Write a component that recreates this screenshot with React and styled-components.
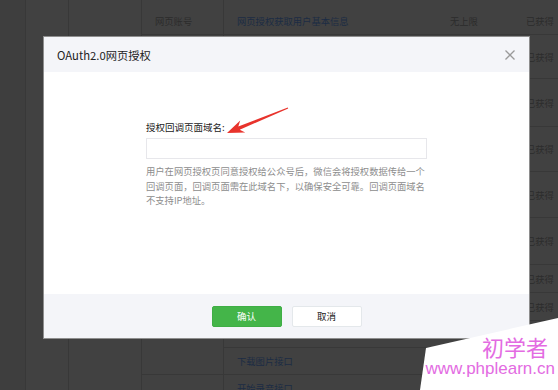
import React from "react";
import styled, { createGlobalStyle } from "styled-components";

const GlobalStyle = createGlobalStyle`
  html, body {
    margin: 0;
    padding: 0;
    background: #414141;
  }
  body {
    font-family: "Noto Sans CJK SC", "Liberation Sans", sans-serif;
  }
`;

const Page = styled.div`
  position: relative;
  width: 558px;
  height: 390px;
  overflow: hidden;
  background: #414141;
`;

// dimmed table behind the dialog
const Table = styled.div`
  display: flex;
  flex-direction: column;
`;

const Row = styled.div`
  display: flex;
  flex: none;
  height: ${(p) => p.$h}px;
`;

const Cell = styled.div`
  box-sizing: border-box;
  flex: none;
  width: ${(p) => p.$w}px;
  display: flex;
  align-items: ${(p) => (p.$top ? "flex-end" : "center")};
  padding: 0 0 ${(p) => (p.$top ? 6 : 0)}px 13px;
  border-right: ${(p) => (p.$rule ? "1px solid #383838" : "none")};
  border-bottom: ${(p) => (p.$line ? "1px solid #383838" : "none")};
  background: ${(p) => (p.$dim ? "#3e3e3e" : "transparent")};
  font-size: 9.3px;
  color: ${(p) => (p.$link ? "#1c2c44" : "#2c2c2c")};
  white-space: nowrap;
  overflow: hidden;
`;

const widths = [26, 43, 73, 82, 213, 76, 45];

const rows = [
  { h: 35, cat: "网页账号", api: "网页授权获取用户基本信息", limit: "无上限", state: "已获得", top: true, catLine: true },
  { h: 44, state: "已获得" },
  { h: 48, state: "已获得" },
  { h: 45, state: "已获得" },
  { h: 46, state: "已获得" },
  { h: 47, state: "已获得" },
  { h: 28, state: "已获得" },
  { h: 28, state: "已获得" },
  { h: 27 },
  { h: 27, api: "下载图片接口", catLine: true },
  { h: 27, api: "开始录音接口" },
];

// dialog
const Modal = styled.div`
  position: absolute;
  left: 43px;
  top: 36px;
  width: 487px;
  height: 303px;
  box-sizing: border-box;
  border: 1px solid #8e8e8e;
  background: #fff;
  display: flex;
  flex-direction: column;
`;

const Header = styled.div`
  height: 35px;
  flex: none;
  background: #f4f5f9;
  display: flex;
  align-items: center;
  justify-content: space-between;
  padding: 0 13px;
`;

const Title = styled.div`
  font-size: 11.3px;
  color: #222;
`;

const Close = styled.svg`
  width: 10px;
  height: 10px;
  margin-right: 1px;
`;

const Body = styled.div`
  flex: 1;
  padding-top: 49px;
  display: flex;
  justify-content: center;
`;

const Field = styled.div`
  width: 281px;
  display: flex;
  flex-direction: column;
`;

const Label = styled.div`
  font-size: 9.5px;
  line-height: 12px;
  color: #222;
`;

const Input = styled.div`
  box-sizing: border-box;
  height: 21px;
  margin-top: 5px;
  border: 1px solid #e7e7eb;
  background: #fff;
`;

const Hint = styled.div`
  margin-top: 5px;
  font-size: 9.3px;
  line-height: 14.5px;
  color: #8d8d8d;
  white-space: nowrap;
`;

const Footer = styled.div`
  height: 44px;
  flex: none;
  background: #f4f5f9;
  display: flex;
  align-items: center;
  justify-content: center;
  gap: 10px;
`;

const Button = styled.button`
  box-sizing: border-box;
  width: 70px;
  height: 21px;
  padding: 0;
  border-radius: 2px;
  border: 1px solid ${(p) => (p.$primary ? "#3fae45" : "#e4e8eb")};
  background: ${(p) => (p.$primary ? "#44b549" : "#fff")};
  color: ${(p) => (p.$primary ? "#fff" : "#222")};
  font-family: inherit;
  font-size: 9.5px;
`;

const Arrow = styled.svg`
  position: absolute;
  left: 220px;
  top: 100px;
  width: 80px;
  height: 40px;
`;

// site watermark in the corner
const Mark = styled.div`
  position: absolute;
  right: 0;
  bottom: 0;
  width: 138px;
  height: 72px;
  background: #fff;
  clip-path: polygon(6px 30px, 100% 0, 100% 100%, 0 100%);
  display: flex;
  flex-direction: column;
  align-items: flex-end;
  color: #e36be2;
`;

const MarkTitle = styled.div`
  font-size: 22px;
  line-height: 26px;
  margin-top: 15px;
  margin-right: 10px;
`;

const MarkUrl = styled.div`
  font-family: "Liberation Sans", sans-serif;
  font-size: 17px;
  line-height: 20px;
  margin-right: 3px;
`;

export default function App() {
  return (
    <Page>
      <GlobalStyle />
      <Table>
        {rows.map((r, i) => (
          <Row key={i} $h={r.h}>
            <Cell $w={widths[0]} $rule $dim />
            <Cell $w={widths[1]} $rule />
            <Cell $w={widths[2]} $rule />
            <Cell $w={widths[3]} $rule $line={r.catLine} $top={r.top}>
              {r.cat}
            </Cell>
            <Cell $w={widths[4]} $line $link $top={r.top}>
              {r.api}
            </Cell>
            <Cell $w={widths[5]} $line $top={r.top}>
              {r.limit}
            </Cell>
            <Cell $w={widths[6]} $line $top={r.top}>
              {r.state}
            </Cell>
          </Row>
        ))}
      </Table>

      <Modal>
        <Header>
          <Title>OAuth2.0网页授权</Title>
          <Close viewBox="0 0 10 10">
            <path d="M0.5 0.5 L9.5 9.5 M9.5 0.5 L0.5 9.5" stroke="#9a9a9a" strokeWidth="1.3" fill="none" />
          </Close>
        </Header>
        <Body>
          <Field>
            <Label>授权回调页面域名:</Label>
            <Input />
            <Hint>
              用户在网页授权页同意授权给公众号后，微信会将授权数据传给一个
              <br />
              回调页面，回调页面需在此域名下，以确保安全可靠。回调页面域名
              <br />
              不支持IP地址。
            </Hint>
          </Field>
        </Body>
        <Footer>
          <Button $primary>确认</Button>
          <Button>取消</Button>
        </Footer>
      </Modal>

      <Arrow viewBox="0 0 80 40">
        <polygon
          points="7,33 25.2,32.6 19.7,29.7 68.2,8.5 67.8,7.5 18.3,26.4 20.2,20.5"
          fill="#e8332c"
        />
      </Arrow>

      <Mark>
        <MarkTitle>初学者</MarkTitle>
        <MarkUrl>www.phplearn.cn</MarkUrl>
      </Mark>
    </Page>
  );
}
